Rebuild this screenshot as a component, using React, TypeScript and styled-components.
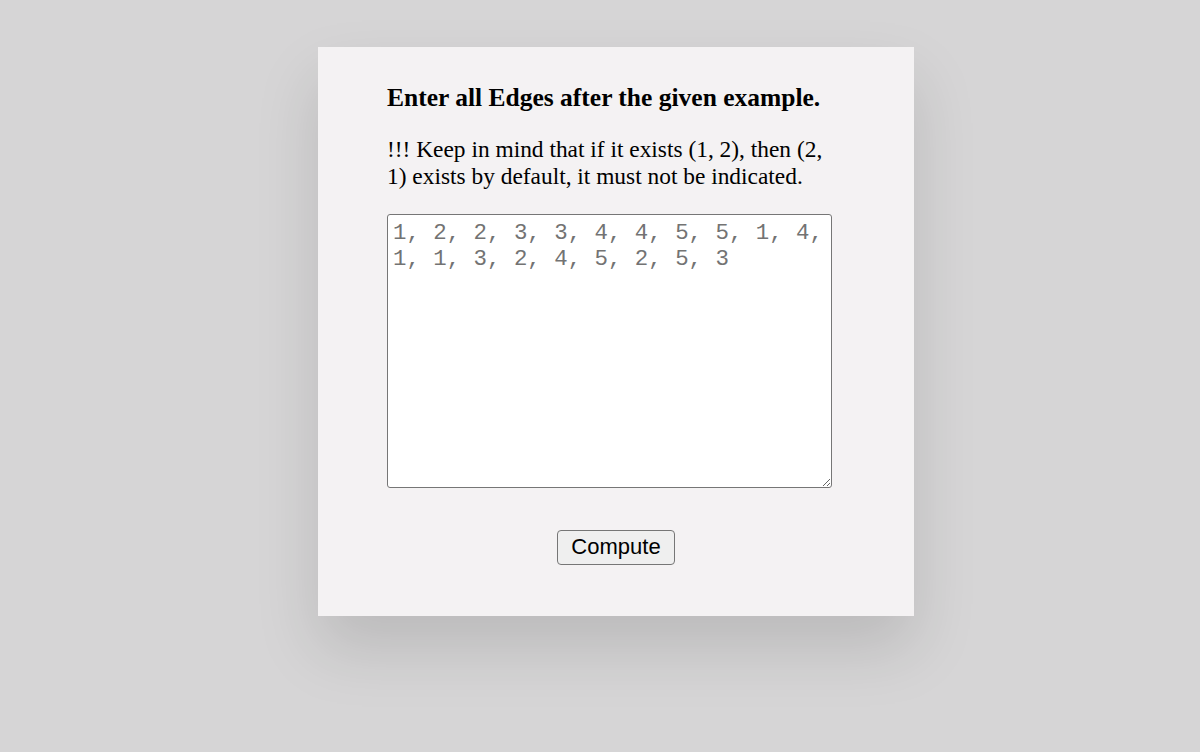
import React from "react";
import styled, { createGlobalStyle } from "styled-components";

const GlobalStyle = createGlobalStyle`
  html, body {
    margin: 0;
    padding: 0;
    background: #d6d5d6;
  }
  body {
    font-family: "Liberation Serif", "Times New Roman", serif;
  }
`;

const Page = styled.main`
  min-height: 752px;
  box-sizing: border-box;
  padding: 47px 0 0 318px;
  display: flex;
  align-items: flex-start;
`;

const Card = styled.section`
  width: 596px;
  height: 569px;
  box-sizing: border-box;
  background: #f4f2f3;
  padding: 36px 69px 0 69px;
  display: flex;
  flex-direction: column;
  box-shadow: 0 32px 60px rgba(0, 0, 0, 0.13);
`;

const Title = styled.h2`
  margin: 0;
  font-family: "Liberation Serif", "Times New Roman", serif;
  font-weight: 700;
  font-size: 25.5px;
  line-height: 29.3px;
  color: #000;
`;

const Note = styled.p`
  margin: 23.6px 0 0 0;
  width: 445px;
  font-family: "Liberation Serif", "Times New Roman", serif;
  font-size: 23.4px;
  line-height: 27px;
  color: #000;
`;

const EdgeInput = styled.textarea`
  margin-top: 23.8px;
  width: 445px;
  height: 274px;
  box-sizing: border-box;
  padding: 5px 5px;
  border: 1px solid #767676;
  border-radius: 3px;
  background: #fff;
  font-family: "Liberation Mono", "Courier New", monospace;
  font-size: 22.4px;
  line-height: 26px;
  color: #000;
  resize: both;
  outline: none;
  &::placeholder {
    color: #737373;
    opacity: 1;
  }
`;

const Actions = styled.div`
  display: flex;
  justify-content: center;
  margin-top: 42px;
  margin-left: -69px;
  margin-right: -69px;
`;

const Button = styled.button`
  height: 35px;
  box-sizing: border-box;
  padding: 0 13px;
  font-family: "Liberation Sans", Arial, sans-serif;
  font-size: 22px;
  color: #000;
  background: #efefef;
  border: 1px solid #767676;
  border-radius: 4px;
  cursor: pointer;
`;

export default function App() {
  return (
    <>
      <GlobalStyle />
      <Page>
        <Card>
          <Title>Enter all Edges after the given example.</Title>
          <Note>
            !!! Keep in mind that if it exists (1, 2), then (2, 1) exists by
            default, it must not be indicated.
          </Note>
          <EdgeInput placeholder="1, 2, 2, 3, 3, 4, 4, 5, 5, 1, 4, 1, 1, 3, 2, 4, 5, 2, 5, 3" />
          <Actions>
            <Button type="button">Compute</Button>
          </Actions>
        </Card>
      </Page>
    </>
  );
}
